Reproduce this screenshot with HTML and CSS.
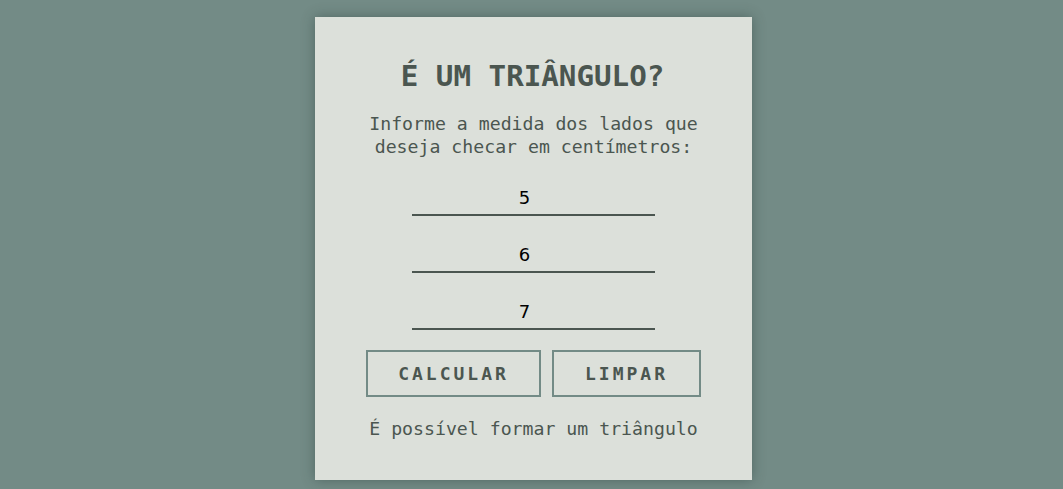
FILE: index.html
```html
<!DOCTYPE html>
<html lang="pt-BR">
<head>
<meta charset="utf-8">
<title>É um triângulo?</title>
<link rel="stylesheet" href="styles.css">
</head>
<body>
<main class="card">
  <h1 class="title">É UM TRIÂNGULO?</h1>
  <p class="intro">Informe a medida dos lados que<br>deseja checar em centímetros:</p>
  <div class="fields">
    <input class="side" type="number" value="5">
    <input class="side" type="number" value="6">
    <input class="side" type="number" value="7">
  </div>
  <div class="actions">
    <button class="btn btn-calc" type="button">CALCULAR</button>
    <button class="btn btn-clear" type="button">LIMPAR</button>
  </div>
  <p class="result">É possível formar um triângulo</p>
</main>
</body>
</html>
```
FILE: styles.css
```css
html, body {
  margin: 0;
  height: 100%;
}
body {
  background: #738b86;
  display: flex;
  justify-content: center;
  align-items: flex-start;
  padding: 17px 0 0 4px;
  box-sizing: border-box;
  font-family: "DejaVu Sans Mono", monospace;
  color: #4b5650;
}
.card {
  width: 437px;
  height: 463px;
  box-sizing: border-box;
  background: #dce0da;
  box-shadow: 0 0 12px rgba(40, 60, 55, 0.45);
  display: flex;
  flex-direction: column;
  align-items: center;
  padding-top: 42px;
}
.title {
  margin: 0;
  font-size: 29.2px;
  line-height: 34px;
  font-weight: bold;
  letter-spacing: 0;
  padding-right: 2px;
}
.intro {
  margin: 19px 0 0;
  font-size: 18.2px;
  line-height: 23px;
  text-align: center;
}
.fields {
  margin-top: 22px;
  display: flex;
  flex-direction: column;
  gap: 21px;
}
.side {
  width: 243px;
  height: 36px;
  box-sizing: border-box;
  border: none;
  border-bottom: 2px solid #4b5650;
  background: transparent;
  padding: 0 3px 0 0;
  font-family: "DejaVu Sans", sans-serif;
  font-size: 18px;
  color: #000;
  text-align: center;
  outline: none;
}
.actions {
  margin-top: 20px;
  display: flex;
  gap: 11px;
}
.btn {
  height: 47px;
  box-sizing: border-box;
  border: 2px solid #738b86;
  background: transparent;
  font-family: "DejaVu Sans Mono", monospace;
  font-weight: bold;
  font-size: 18px;
  letter-spacing: 3px;
  color: #4b5650;
  padding: 0;
}
.btn-calc { width: 175px; }
.btn-clear { width: 149px; }
.result {
  margin: 20px 0 0;
  font-size: 18.2px;
  line-height: 23px;
}
```
